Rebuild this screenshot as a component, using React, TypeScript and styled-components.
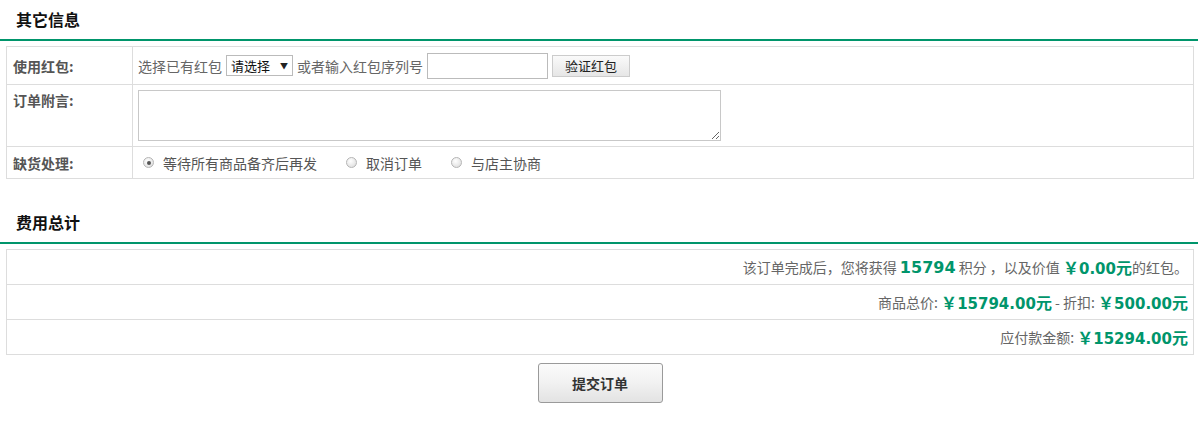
import { FC } from 'react';
import styled, { createGlobalStyle } from 'styled-components';

const GREEN = '#00956b';

const GlobalStyle = createGlobalStyle`
	html, body {
		margin: 0;
		padding: 0;
		background: #fff;
	}
	body {
		font-family: 'Noto Sans CJK SC', 'DejaVu Sans', sans-serif;
		font-size: 14px;
		color: #666;
	}
`;

const Page = styled.div`
	width: 1200px;
`;

const Section = styled.section<{ $top?: number }>`
	margin-top: ${p => p.$top ?? 0}px;
`;

const SectionTitle = styled.h2`
	margin: 0;
	height: 39px;
	line-height: 38px;
	padding-left: 16px;
	font-size: 16px;
	font-weight: bold;
	color: #111;
	width: 1182px;
	border-bottom: 2px solid ${GREEN};
`;

const Table = styled.div`
	margin: 5px 6px 0;
	width: 1186px;
	border: 1px solid #ddd;
`;

const Row = styled.div<{ $h: number }>`
	display: flex;
	height: ${p => p.$h}px;
	border-top: 1px solid #ddd;

	&:first-child {
		border-top: none;
	}
`;

const Label = styled.div`
	width: 119px;
	flex: none;
	padding: 0 0 0 6px;
	border-right: 1px solid #ddd;
	font-weight: bold;
	font-size: 14px;
	color: #555;
	display: flex;
	align-items: center;
`;

const TopLabel = styled(Label)`
	align-items: flex-start;
	padding-top: 5px;
`;

const Cell = styled.div<{ $gap?: number }>`
	flex: 1;
	display: flex;
	align-items: center;
	padding-left: 5px;
	gap: ${p => p.$gap ?? 4}px;
	white-space: nowrap;
`;

const TopCell = styled(Cell)`
	align-items: flex-start;
	padding-top: 5px;
`;

const FakeSelect = styled.span`
	display: inline-flex;
	align-items: center;
	justify-content: space-between;
	box-sizing: border-box;
	width: 67px;
	height: 21px;
	padding: 0 4px 0 4px;
	border: 1px solid #bbb;
	color: #111;
	font-size: 13px;

	& i {
		font-style: normal;
		font-size: 8px;
		color: #222;
	}
`;

const TextInput = styled.input`
	box-sizing: border-box;
	width: 121px;
	height: 26px;
	border: 1px solid #bbb;
	margin: 0;
	padding: 2px 4px;
	outline: none;
`;

const SmallButton = styled.button`
	box-sizing: border-box;
	width: 78px;
	height: 22px;
	margin: 0;
	border: 1px solid #ccc;
	background: linear-gradient(#fafafa, #e6e6e6);
	font-family: 'Noto Sans CJK SC', sans-serif;
	font-size: 13px;
	color: #222;
	padding: 0;
	line-height: 20px;
`;

const Note = styled.textarea`
	box-sizing: border-box;
	width: 583px;
	height: 51px;
	border: 1px solid #c8c8c8;
	margin: 0;
	resize: both;
	outline: none;
`;

const RadioGroup = styled.label`
	display: inline-flex;
	align-items: center;
	gap: 9px;
	margin-left: 5px;
	margin-right: 24px;
	color: #555;
`;

const Radio = styled.span<{ $checked?: boolean }>`
	position: relative;
	width: 11px;
	height: 11px;
	box-sizing: border-box;
	border-radius: 50%;
	border: 1px solid #b5b5b5;
	background: radial-gradient(circle at 40% 35%, #fff, #d8d8d8);

	&::after {
		content: '';
		display: ${p => (p.$checked ? 'block' : 'none')};
		position: absolute;
		left: 2.5px;
		top: 2.5px;
		width: 4px;
		height: 4px;
		border-radius: 50%;
		background: #555;
	}
`;

const SumRow = styled.div`
	height: 34px;
	display: flex;
	align-items: center;
	justify-content: flex-end;
	padding-right: 5px;
	border-top: 1px solid #ddd;
	color: #666;
	white-space: pre;

	&:first-child {
		border-top: none;
	}
`;

const Money = styled.b<{ $size?: number }>`
	color: ${GREEN};
	font-family: 'DejaVu Sans', 'Noto Sans CJK SC', sans-serif;
	font-weight: bold;
	font-size: ${p => p.$size ?? 15}px;

	& em,
	& u {
		font-style: normal;
		text-decoration: none;
		font-family: 'Noto Sans CJK SC', sans-serif;
		font-size: 16px;
	}
`;

const Actions = styled.div`
	display: flex;
	justify-content: center;
	padding-top: 8px;
`;

const SubmitButton = styled.button`
	box-sizing: border-box;
	width: 125px;
	height: 40px;
	border: 1px solid #9a9a9a;
	border-radius: 3px;
	background: linear-gradient(#fbfbfb 0%, #f1f1f1 50%, #e3e3e3 100%);
	font-family: 'Noto Sans CJK SC', sans-serif;
	font-size: 14px;
	font-weight: bold;
	color: #333;
	cursor: pointer;
`;

const Price: FC<{ value: string }> = ({ value }) => (
	<Money>
		<u>￥</u>
		{value}
		<em>元</em>
	</Money>
);

const shortageOptions = ['等待所有商品备齐后再发', '取消订单', '与店主协商'];

const App: FC = () => {
	return (
		<Page>
			<GlobalStyle />
			<Section>
				<SectionTitle>其它信息</SectionTitle>
				<Table>
					<Row $h={37}>
						<Label>使用红包:</Label>
						<Cell>
							选择已有红包
							<FakeSelect>
								请选择<i>▼</i>
							</FakeSelect>
							或者输入红包序列号
							<TextInput />
							<SmallButton>验证红包</SmallButton>
						</Cell>
					</Row>
					<Row $h={61}>
						<TopLabel>订单附言:</TopLabel>
						<TopCell>
							<Note />
						</TopCell>
					</Row>
					<Row $h={31}>
						<Label>缺货处理:</Label>
						<Cell $gap={0}>
							{shortageOptions.map((o, i) => (
								<RadioGroup key={o}>
									<Radio $checked={i === 0} />
									{o}
								</RadioGroup>
							))}
						</Cell>
					</Row>
				</Table>
			</Section>
			<Section $top={24}>
				<SectionTitle>费用总计</SectionTitle>
				<Table>
					<SumRow>
						{'该订单完成后，您将获得 '}
						<Money $size={16}>15794</Money>
						{' 积分 ，以及价值 '}
						<Price value="0.00" />
						的红包。
					</SumRow>
					<SumRow>
						{'商品总价: '}
						<Price value="15794.00" />
						{' - 折扣: '}
						<Price value="500.00" />
					</SumRow>
					<SumRow>
						{'应付款金额: '}
						<Price value="15294.00" />
					</SumRow>
				</Table>
			</Section>
			<Actions>
				<SubmitButton>提交订单</SubmitButton>
			</Actions>
		</Page>
	);
};

export default App;
